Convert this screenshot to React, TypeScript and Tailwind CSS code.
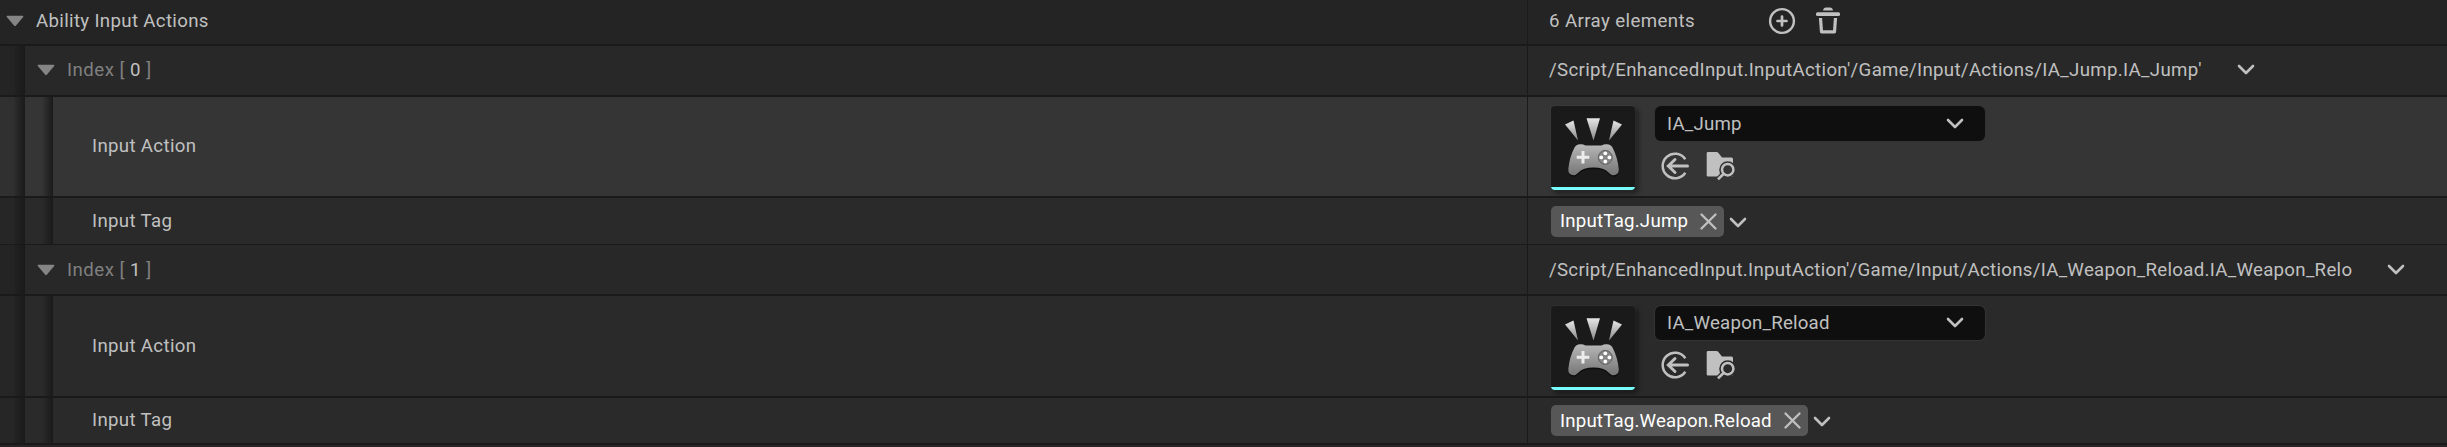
import React from "react";

function Triangle() {
  return (
    <svg width="18" height="12" viewBox="0 0 18 12" className="shrink-0">
      <path d="M1.2 .8h15.6q.9.2.4 1.100L10 10.600q-1 1-2 0L.8 1.900q-.5-.9.4-1.100z" fill="#858585" />
    </svg>
  );
}

function Chevron({ className = "" }: { className?: string }) {
  return (
    <svg width="18" height="12" viewBox="0 0 18 12" className={"shrink-0 " + className}>
      <path d="M2 2l7 7 7-7" fill="none" stroke="#c0c0c0" strokeWidth="2.6" strokeLinecap="round" strokeLinejoin="round" />
    </svg>
  );
}

function PlusIcon() {
  return (
    <svg width="28" height="28" viewBox="0 0 28 28" className="shrink-0">
      <circle cx="14" cy="14" r="11.9" fill="none" stroke="#c0c0c0" strokeWidth="2.4" />
      <path d="M14 9.500v9M9.500 14h9" stroke="#c0c0c0" strokeWidth="2.700" strokeLinecap="round" />
    </svg>
  );
}

function TrashIcon() {
  return (
    <svg width="24" height="27" viewBox="0 0 24 27" className="shrink-0">
      <path d="M7 3.600Q7.500.500 10 .500h4q2.500 0 3 3.100z" fill="#c0c0c0" />
      <rect x="0" y="5.300" width="24" height="3.600" rx="1.500" fill="#c0c0c0" />
      <path d="M4.500 11l1 13.800h13l1-13.800" fill="none" stroke="#c0c0c0" strokeWidth="3.200" strokeLinejoin="round" />
    </svg>
  );
}

function UseSelectedIcon() {
  return (
    <svg width="28" height="28" viewBox="0 0 28 28" className="shrink-0">
      <path d="M24.300 7.300A12.300 12.300 0 1 0 24.300 20.700" fill="none" stroke="#c0c0c0" strokeWidth="2.500" />
      <path d="M26.500 14H8M14 7.500L7.300 14l6.700 6.500" fill="none" stroke="#c0c0c0" strokeWidth="3" strokeLinecap="round" />
    </svg>
  );
}

function BrowseIcon() {
  return (
    <svg width="29" height="29" viewBox="0 0 29 29" className="shrink-0">
      <mask id="lens-gap">
        <rect width="29" height="29" fill="#fff" />
        <circle cx="21.700" cy="17.700" r="8.500" fill="#000" />
        <path d="M17.500 22L11 28.800" stroke="#000" strokeWidth="5.500" />
      </mask>
      <path d="M2 0H10.500Q11.500 0 12.200.8L16 5.500H25.500Q27 5.500 27 7V24.500H2Q.700 24.500 .700 23.200V1.300Q.700 0 2 0z" fill="#c0c0c0" mask="url(#lens-gap)" />
      <circle cx="21.700" cy="17.700" r="5.700" fill="none" stroke="#c0c0c0" strokeWidth="2.500" />
      <path d="M17.500 22L12 27.400" stroke="#c0c0c0" strokeWidth="2.600" />
    </svg>
  );
}

const PAD_OUTLINE =
  "M29 38.300Q32 38 34.500 39.500H50.500Q53 38 56 38.300Q60 38.500 61.500 41.500Q66.500 51 67.800 63Q68 69 62.500 69.200Q60 69.300 57.500 66.500Q53 61.500 42.500 61.500Q32 61.500 27.500 66.500Q25 69.300 22.500 69.200Q17 69 17.300 63Q18.500 51 23.500 41.500Q25 38.500 29 38.300z";

function Thumbnail() {
  return (
    <div className="flex h-21 w-21 shrink-0 flex-col overflow-hidden rounded-[4px] bg-[#1a1a1a] shadow-[3px_3px_4px_1px_rgba(0,0,0,0.35),0_0_0_1px_rgba(255,255,255,0.04)]">
      <svg width="84" height="81" viewBox="0 0 84 81">
        <defs>
          <linearGradient id="ray" x1="0" y1="0" x2="0" y2="1">
            <stop offset="0" stopColor="#e6e6e6" />
            <stop offset="1" stopColor="#8a8a8a" />
          </linearGradient>
          <linearGradient id="pad" x1="0" y1="0" x2="0" y2="1">
            <stop offset="0" stopColor="#b8b8b8" />
            <stop offset="1" stopColor="#757575" />
          </linearGradient>
        </defs>
        <path d="M14 18.500L22.500 14.500 27 34.500z" fill="url(#ray)" />
        <path d="M35.500 12.300H49L42.500 34.500z" fill="url(#ray)" />
        <path d="M62.500 14.500L71 18.500 58 34.500z" fill="url(#ray)" />
        <path d={PAD_OUTLINE} transform="translate(0 1.500)" fill="#0d0d0d" />
        <path d={PAD_OUTLINE} fill="url(#pad)" />
        <path d="M32 45v12.500M25.700 51.200h12.600" stroke="#ececec" strokeWidth="3" />
        <circle cx="54.300" cy="51.400" r="7" fill="#858585" stroke="#626262" strokeWidth="1" />
        <g fill="#fff">
          <circle cx="54.300" cy="47.300" r="1.900" />
          <circle cx="54.300" cy="55.500" r="1.900" />
          <circle cx="50.200" cy="51.400" r="1.900" />
          <circle cx="58.400" cy="51.400" r="1.900" />
        </g>
      </svg>
      <div className="h-[3px] bg-[#77fbfd]" />
    </div>
  );
}

type RowProps = {
  className: string;
  depth: number;
  edge?: string;
  nudge?: string;
  name: React.ReactNode;
  children?: React.ReactNode;
};

function Row({ className, depth, edge = "border-b-2", nudge = "", name, children }: RowProps) {
  return (
    <div className={"flex shrink-0 border-[#1a1a1a] " + edge + " " + className}>
      <div className="flex w-[1528px] shrink-0 border-r border-[#1a1a1a]">
        {depth > 0 && <div className="w-[25px] shrink-0 bg-linear-to-r from-black/10 from-55% to-[#1a1a1a]" />}
        {depth > 1 && <div className="w-7 shrink-0 bg-linear-to-r from-transparent from-60% to-[#1a1a1a]" />}
        <div className={"flex items-center " + nudge}>{name}</div>
      </div>
      <div className={"flex min-w-0 flex-1 items-center pl-[21px] " + (depth < 2 ? nudge : "")}>{children}</div>
    </div>
  );
}

type ElementProps = {
  index: number;
  path: string;
  asset: string;
  tag: string;
  first?: boolean;
};

function ElementRows({ index, path, asset, tag, first }: ElementProps) {
  return (
    <>
      <Row
        className="h-[51px] bg-[#282828]"
        depth={1}
        nudge={first ? "pb-[2px]" : ""}
        name={
          <div className="flex items-center pl-3">
            <Triangle />
            <span className="pl-3 tracking-[0.48px] whitespace-pre text-[#808080]">
              Index [ <span className="text-[#c0c0c0]">{index}</span> ]
            </span>
          </div>
        }
      >
        <span className={first ? "tracking-[0.32px]" : "tracking-[0.29px]"}>{path}</span>
        <Chevron className="ml-[35px]" />
      </Row>
      <Row
        className={first ? "h-[101px] bg-[#353535]" : "h-[102px] bg-[#2a2a2a]"}
        depth={2}
        nudge={first ? "pb-[2px]" : ""}
        name={<span className="pl-[39px]">Input Action</span>}
      >
        <div className="flex gap-5 pt-[3px] pl-[2px]">
          <Thumbnail />
          <div>
            <div
              className={
                "flex w-[330px] items-center justify-between rounded-md bg-[#0f0f0f] pr-[21px] pl-3 shadow-[0_0_0_1px_#343434] " +
                (first ? "h-[35px]" : "h-[34px]")
              }
            >
              <span className="tracking-[0.22px]">{asset}</span>
              <Chevron />
            </div>
            <div className="flex gap-[17px] pt-[11px] pl-[6px]">
              <UseSelectedIcon />
              <BrowseIcon />
            </div>
          </div>
        </div>
      </Row>
      <Row
        className="h-[47px] bg-[#2a2a2a]"
        edge={first ? "border-b" : "border-b-2"}
        depth={2}
        nudge={first ? "" : "pb-px"}
        name={<span className="pl-[39px]">Input Tag</span>}
      >
        <div className="ml-[2px] flex h-[31px] items-center rounded-[5px] bg-[#575757] pr-[7px] pl-[9px] text-white">
          <span className={first ? "tracking-[0.22px]" : "tracking-[0.18px]"}>{tag}</span>
          <svg width="17" height="17" viewBox="0 0 17 17" className="ml-3">
            <path d="M1.500 1.500l14 14M15.500 1.500l-14 14" stroke="#c0c0c0" strokeWidth="2.300" strokeLinecap="round" />
          </svg>
        </div>
        <Chevron className="mt-[3px] ml-[5px]" />
      </Row>
    </>
  );
}

export default function App() {
  return (
    <div className="flex h-[447px] w-[2447px] flex-col overflow-hidden bg-[#282425] font-['Roboto',sans-serif] text-[18.67px] leading-6 tracking-[0.33px] whitespace-nowrap text-[#c0c0c0]">
      <Row
        className="h-[46px] bg-[#242424]"
        depth={0}
        nudge="pb-[3px]"
        name={
          <div className="flex items-center pl-[6px]">
            <Triangle />
            <span className="pl-3">Ability Input Actions</span>
          </div>
        }
      >
        <span className="tracking-[0.4px]">6 Array elements</span>
        <div className="flex items-center gap-5 pl-[73px]">
          <PlusIcon />
          <TrashIcon />
        </div>
      </Row>
      <ElementRows
        index={0}
        path="/Script/EnhancedInput.InputAction'/Game/Input/Actions/IA_Jump.IA_Jump'"
        asset="IA_Jump"
        tag="InputTag.Jump"
        first
      />
      <ElementRows
        index={1}
        path="/Script/EnhancedInput.InputAction'/Game/Input/Actions/IA_Weapon_Reload.IA_Weapon_Relo"
        asset="IA_Weapon_Reload"
        tag="InputTag.Weapon.Reload"
      />
    </div>
  );
}
